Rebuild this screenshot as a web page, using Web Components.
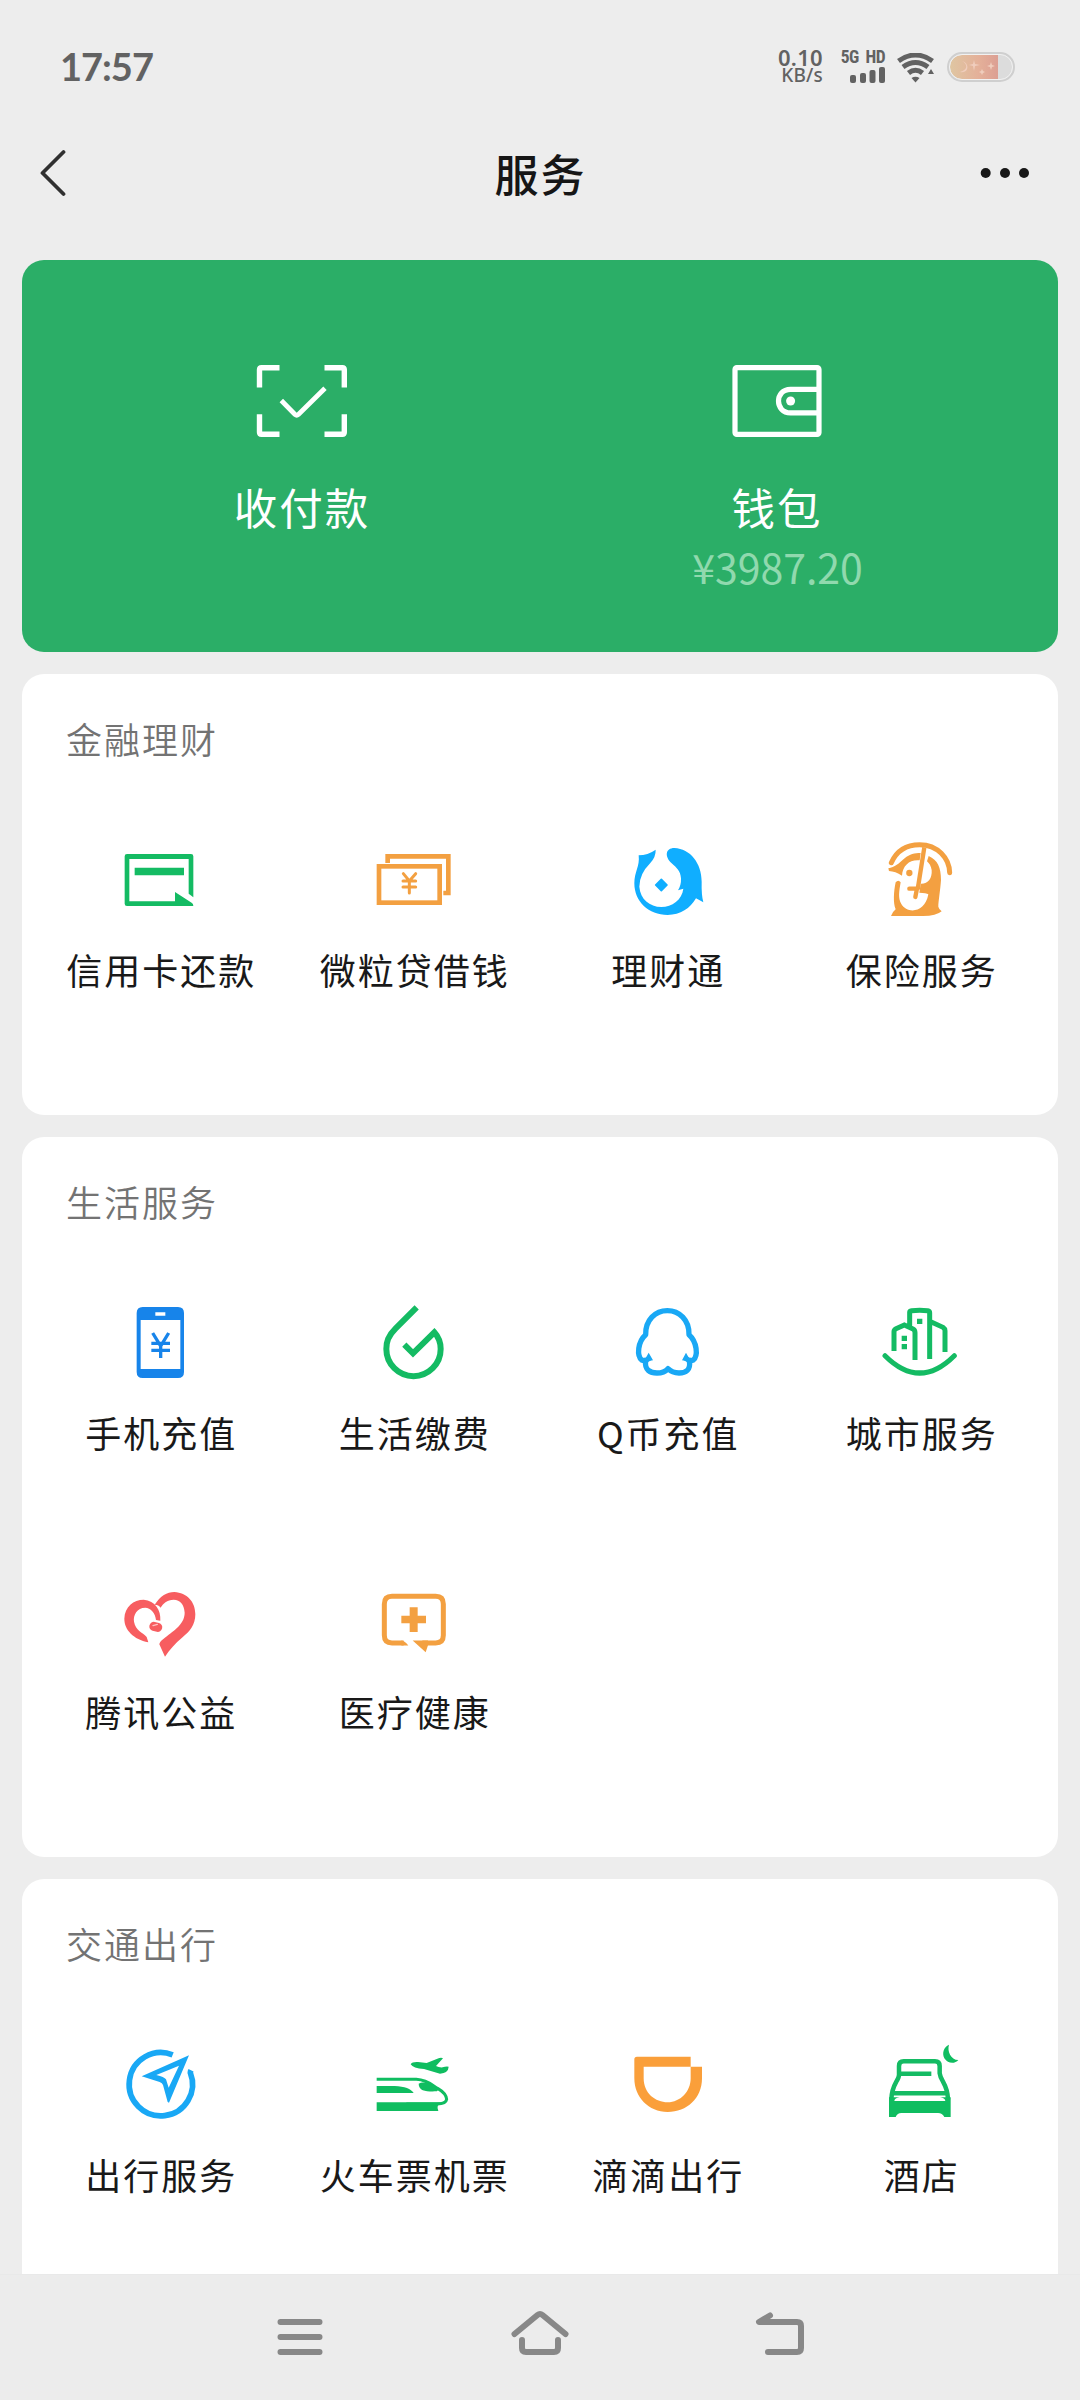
<!DOCTYPE html>
<html lang="zh-CN">
<head>
<meta charset="utf-8">
<title>服务</title>
<style>
html,body{margin:0;padding:0}
body{width:1080px;height:2400px;overflow:hidden;background:#ededed;color:#181818;font-family:"Noto Sans CJK SC",sans-serif}
</style>
</head>
<body>
<app-shell>
  <status-bar slot="top"></status-bar>
  <title-bar slot="top">服务</title-bar>
  <pay-card>
    <pay-item icon="scan">收付款</pay-item>
    <pay-item icon="wallet" amount="¥3987.20">钱包</pay-item>
  </pay-card>
  <service-section heading="金融理财">
    <service-item icon="credit">信用卡还款</service-item>
    <service-item icon="loan">微粒贷借钱</service-item>
    <service-item icon="wealth">理财通</service-item>
    <service-item icon="insurance">保险服务</service-item>
  </service-section>
  <service-section heading="生活服务">
    <service-item icon="phone">手机充值</service-item>
    <service-item icon="bills">生活缴费</service-item>
    <service-item icon="qcoin">Q币充值</service-item>
    <service-item icon="city">城市服务</service-item>
    <service-item icon="charity">腾讯公益</service-item>
    <service-item icon="health">医疗健康</service-item>
  </service-section>
  <service-section heading="交通出行">
    <service-item icon="travel">出行服务</service-item>
    <service-item icon="train">火车票机票</service-item>
    <service-item icon="didi">滴滴出行</service-item>
    <service-item icon="hotel">酒店</service-item>
  </service-section>
  <nav-bar slot="bottom"></nav-bar>
</app-shell>
<script>
const G='#14bb63', O='#f3a041', B='#19a8f5';
const ICONS={
scan:['252 352 100 98',`<g fill="none" stroke="#fff" stroke-width="5.4"><path d="M279.500 367.700H261.500Q259.500 367.700 259.500 369.700V387.500M324.500 367.700H342.300Q344.300 367.700 344.300 369.700V387.500M259.500 414.300V432.300Q259.500 434.300 261.500 434.300H279.500M324.500 434.300H342.300Q344.300 434.300 344.300 432.300V414.300"/><path d="M281.300 400.500L295 414.500Q296.700 416 298.400 414.500L325 388.300" stroke-width="4.800"/></g>`],
wallet:['727 352 100 98',`<g fill="none" stroke="#fff" stroke-width="5.200"><rect x="735" y="367.600" width="84" height="66.800" rx="1.800"/><path d="M819 389.300H790.500C774.500 389.300 774.500 412.800 790.500 412.800H819"/></g><circle cx="790.600" cy="401" r="4.500" fill="#fff"/>`],
credit:['215 396 288 288',`<g fill="${G}"><path fill-rule="evenodd" d="M260 462H452Q459 462 459 469V592L445 581V477H267V604H404V576L455 609Q459 612 459 618H260Q253 618 253 611V469Q253 462 260 462Z"/><path d="M283 503H431V526H283Z"/></g>`],
loan:['976 396 288 288',`<g fill="none" stroke="${O}" stroke-width="14"><rect x="1018" y="499" width="182" height="109"/><path d="M1044 489V469H1226V579H1211"/><path stroke-width="9" stroke-linecap="round" d="M1091 521L1109 543L1128 521M1109 543V579M1090 543H1128M1090 561H1128"/></g>`],
wealth:['236 396 288 288',`<path fill="#10aeff" d="M295 466Q322 466 346 449Q347 470 330 489Q297 522 297 560C300 598 328 620 363 621C395 620 425 600 429 566L413 571Q423 555 422 535C420 512 410 505 394 490C372 470 375 444 402 444C450 446 484 490 484 545Q483 585 489 607L467 595C450 625 420 645 382 645C325 645 282 605 282 550C282 515 299 500 295 466Z"/><path fill="#10aeff" stroke="#10aeff" stroke-width="5" stroke-linejoin="round" d="M363 538L380 555L363 572L346 555Z"/>`],
insurance:['997 396 288 288',`<g fill="${O}"><path d="M1055 488C1073 447 1108 434 1140 434C1194 434 1229 475 1230 518" fill="none" stroke="${O}" stroke-width="15" stroke-linecap="round"/><path d="M1154 442L1134 568" fill="none" stroke="${O}" stroke-width="13"/><path d="M1109 566H1132L1127 591" fill="none" stroke="${O}" stroke-width="13" stroke-linecap="round" stroke-linejoin="round"/><path d="M1046 505C1065 503 1078 490 1095 475C1110 462 1125 459 1143 459L1140 481C1110 478 1089 496 1087 527Q1067 514 1048 513Z"/><path d="M1167 468C1194 480 1204 502 1204 540C1202 570 1196 605 1196 620Q1198 628 1206 634Q1190 648 1150 648H1054Q1058 636 1068 628C1060 610 1062 575 1068 547Q1076 538 1083 547C1078 575 1075 595 1085 612C1102 642 1156 640 1166 583Q1160 579 1139 578L1143 551C1165 552 1178 535 1176 510C1174 498 1169 490 1162 484Z"/><circle cx="1109" cy="519" r="9.500"/></g>`],
phone:['215 375 288 288',`<path fill="#1784ea" fill-rule="evenodd" d="M307 411H413Q431 411 431 429V606Q431 624 413 624H307Q289 624 289 606V429Q289 411 307 411ZM301 450V597H420V450ZM345 427V437H375V427Z"/><path fill="none" stroke="#1784ea" stroke-width="10" d="M337 489L361 528L385 489M361 526V564M333 520H389M333 541H389"/>`],
bills:['976 375 288 288',`<path fill="none" stroke="${G}" stroke-width="18" d="M1131 412L1068 475C1045 498 1040 515 1040 537A81.500 81.500 0 0 0 1203 537Q1203 508 1184 487L1120 550L1094 524"/>`],
qcoin:['236 75 288 288',`<g fill="none" stroke="${B}" stroke-width="16" stroke-linejoin="round"><path d="M329 263Q315 275 304 270C289 258 292 215 316 194C315 150 345 122 381 122C417 122 447 150 446 194C470 215 474 258 459 270Q448 275 434 263"/><path d="M316 273C312 300 330 309 350 309C366 309 376 304 383 296C391 304 401 309 416 309C436 309 452 300 447 273"/></g><path fill="${B}" d="M325 248L338 271L310 275ZM437 248L425 271L452 275Z"/>`],
city:['997 75 288 288',`<g fill="none" stroke="${G}" stroke-width="15"><path stroke-linecap="round" d="M1036 257Q1140 361 1244 257"/><path d="M1063 243V185Q1063 179 1069 176L1094 165L1120 177Q1126 180 1126 188V270M1110 170V127Q1110 123 1116 122Q1140 120 1164 122Q1170 123 1170 128V267M1170 154L1210 172Q1216 176 1216 182V246"/></g><path fill="${G}" d="M1086 197h16v16h-16zM1086 222h16v16h-16zM1132 146h16v16h-16z"/>`],
charity:['215 42 288 288',`<g fill="#f75d60"><path d="M343 134C360 108 380 96 402 96C440 98 465 125 465 163C465 195 448 215 425 233C405 250 388 268 374 290L357 253Q357 246 370 236C395 215 433 195 433 158C431 133 420 120 400 119C380 120 368 130 361 143Q355 134 343 134Z"/><path d="M360 182L347 180C345 158 330 143 315 143C290 143 278 165 281 185C286 212 306 216 319 231L324 247C280 238 252 210 252 176C253 140 280 119 310 119C345 122 362 150 360 182Z"/><rect x="327" y="187" width="39" height="27" rx="13" transform="rotate(14 346 200)"/></g><path fill="none" stroke="#ffc3c3" stroke-width="4" stroke-linecap="round" d="M338 197L351 193"/>`],
health:['976 42 288 288',`<g fill="${O}"><path fill="none" stroke="${O}" stroke-width="15" d="M1092 249H1057Q1034 249 1034 226V132Q1034 109 1057 109H1188Q1211 109 1211 132V226Q1211 249 1188 249H1148"/><path d="M1085 241.500Q1096 243 1106 256.500H1085ZM1119 241.500H1165V256L1158 277ZM1110 142h24v25h25v23h-25v26h-24v-26h-25v-23h25z"/></g>`],
travel:['215 411 288 288',`<path fill="none" stroke="${B}" stroke-width="17" d="M397 464.500A95 95 0 1 0 450 518Q450 515 452 511"/><path fill="${B}" fill-rule="evenodd" d="M304 529L446 466L386 608L382 606L368 555Q366 549 358 546ZM348 525Q372 531 377 538L385 563L416 497Z"/>`],
train:['976 411 288 288',`<g fill="#0fbd60"><path fill="none" stroke="#0fbd60" stroke-width="9" d="M1011 538H1130C1165 540 1178 556 1195 566C1214 577 1220 588 1221 598Q1219 612 1192 612H1100"/><path d="M1011 607H1206Q1188 616 1196 633H1011ZM1011 558H1065C1095 559 1114 567 1122 579H1011ZM1137 551C1150 542 1182 550 1196 569L1192 574C1165 575 1137 575 1137 551ZM1113 493Q1117 485 1135 486L1161 489L1193 476Q1205 471 1210 475L1189 498Q1198 503 1209 502Q1220 498 1227 500Q1226 519 1201 521L1153 507Q1120 505 1113 493Z"/></g>`],
didi:['236 81 288 288',`<path fill="#fa9f3a" d="M282 148Q282 140 290 140H451V170H310V205C310 250 345 277 382 277C420 277 451 245 451 205V170H485V205C485 265 440 306 382 306C325 306 282 262 282 205Z"/>`],
hotel:['997 81 288 288',`<g fill="#0fbd60"><path fill="none" stroke="#14bb63" stroke-width="13.500" d="M1055 268Q1056 240 1070 215Q1078 202 1078 195V168Q1078 154 1092 154H1186Q1200 154 1200 168V190Q1201 200 1210 215Q1224 240 1225 268M1078 191.500H1175M1060 249.500H1221"/><path d="M1048 262H1080Q1065 264 1064 273H1217Q1216 264 1201 262H1233V321H1214Q1208 309 1195 309H1085Q1073 309 1068 321H1048ZM1228 104C1222 122 1233 150 1256 150C1246 162 1225 162 1214 145C1206 128 1213 110 1228 104Z"/></g>`]
};
const svg=(n,w,h)=>`<svg width="${w}" height="${h}" viewBox="${ICONS[n][0]}" aria-hidden="true">${ICONS[n][1]}</svg>`;
const define=(name,render)=>customElements.define(name,class extends HTMLElement{
  connectedCallback(){ if(!this.shadowRoot) this.attachShadow({mode:'open'}).innerHTML=render(this); }
});

define('app-shell',()=>`<style>
:host{display:flex;flex-direction:column;width:1080px;height:2400px;background:#ededed}
main{flex:1;min-height:0;overflow:hidden;display:flex;flex-direction:column;gap:22px;padding:0 22px}
</style><slot name="top"></slot><main><slot></slot></main><slot name="bottom"></slot>`);

define('status-bar',()=>`<style>
:host{display:flex;height:134px;box-sizing:border-box;padding:0 65px 0 60px;justify-content:space-between;color:#626262}
.time{font:700 38px/40px Lato,sans-serif;margin-top:46px;letter-spacing:-1px}
.right{display:flex;align-items:flex-start;padding-top:49px}
.speed{display:flex;flex-direction:column;align-items:flex-end;width:46px;font-family:"Noto Sans",sans-serif}
.speed span{white-space:nowrap}
.n{font-size:22px;line-height:17px;font-weight:600;letter-spacing:.3px}.k{font-size:19px;line-height:18px;font-weight:500;letter-spacing:.2px}
.net{display:flex;flex-direction:column;align-items:flex-end;margin-left:13px;width:49px}
.net span{font:700 17.500px/16px "Roboto Condensed",Roboto,sans-serif;white-space:nowrap;letter-spacing:-.6px}
svg{display:block}
.net svg{margin-top:1px}.wifi{margin:4px 0 0 12px}.bat{margin:3px 0 0 13px}
</style>
<div class="time">17:57</div>
<div class="right">
<div class="speed"><span class="n">0.10</span><span class="k">KB/s</span></div>
<div class="net"><span>5G&nbsp; HD</span><svg width="36" height="17" fill="#626262"><rect x="1" y="9" width="6" height="8" rx="2"/><rect x="11" y="7" width="6" height="10" rx="2"/><rect x="20.500" y="4" width="6" height="13" rx="2"/><rect x="30" y="1" width="6" height="16" rx="2"/></svg></div>
<svg class="wifi" width="37" height="30" viewBox="0 0 37 30" fill="none" stroke="#626262" stroke-width="5"><path d="M1.500 8Q18.500-4 35.500 8M6 14Q18.500 5 31 14M11.500 20Q18.500 14.500 25.500 20"/><path d="M14.500 25Q18.500 22.500 22.500 25L18.500 29.500ZM34 16L37 21H31Z" fill="#626262" stroke="none"/></svg>
<svg class="bat" width="68" height="30" viewBox="0 0 68 30"><defs><linearGradient id="g"><stop stop-color="#dfc6a2"/><stop offset=".6" stop-color="#e4b099"/><stop offset="1" stop-color="#dc9f93"/></linearGradient></defs><rect x="1" y="1" width="66" height="28" rx="14" fill="#dcdcdc" stroke="#cfcfcf" stroke-width="2"/><path d="M15 3H51V27H15A12 12 0 0 1 15 3Z" fill="url(#g)"/><rect x="2.500" y="2.500" width="63" height="25" rx="12.500" fill="none" stroke="#f1f1f1"/><path d="M15 9C21 12 21 18 13 20C22 22 23 11 15 9ZM27 8L28 12L33 13L28 14L27 19L26 14L22 13L26 12ZM44 10L45 13L48 14L45 15L44 18L43 15L40 14L43 13ZM35 17L36 19L38 20L36 21L35 23L34 21L32 20L34 19Z" fill="#f0cdbd"/></svg>
</div>`);

define('title-bar',()=>`<style>
:host{display:flex;height:126px;box-sizing:border-box;padding:0 50px 48px 40px;align-items:center;justify-content:space-between}
h1{margin:0;font-size:44px;line-height:60px;font-weight:500;letter-spacing:2px;color:#161616;padding-left:34px}
svg{display:block}
</style>
<svg width="27" height="48" viewBox="40 149 27 48"><path d="M63.500 152L42.500 173L63.500 194" fill="none" stroke="#303030" stroke-width="3.800" stroke-linecap="round" stroke-linejoin="round"/></svg>
<h1><slot></slot></h1>
<svg width="50" height="12" viewBox="980 167 50 12" fill="#181818"><circle cx="985.700" cy="173" r="5"/><circle cx="1005" cy="173" r="5"/><circle cx="1024" cy="173" r="5"/></svg>`);

define('pay-card',()=>`<style>
:host{display:grid;grid-template-columns:1fr 1fr;flex:none;height:392px;box-sizing:border-box;padding:92px 44px 0 42px;border-radius:22px;background:#2bae67}
</style><slot></slot>`);

define('pay-item',el=>`<style>
:host{display:flex;flex-direction:column;align-items:center;color:#fff}
svg{display:block}
.t{font-size:43.500px;line-height:60px;letter-spacing:2px;margin-top:27px;padding-left:1px}
.a{font-size:41px;line-height:50px;font-weight:400;color:#90d9ae;margin-top:4px;padding-left:2px;white-space:nowrap}
</style>${svg(el.getAttribute('icon'),100,98)}<div class="t"><slot></slot></div>${el.hasAttribute('amount')?`<div class="a">${el.getAttribute('amount')}</div>`:''}`);

define('service-section',el=>`<style>
:host{display:block;flex:none;box-sizing:border-box;padding:0 11px 54px;border-radius:22px;background:#fff}
h2{margin:0;height:108px;box-sizing:border-box;padding:40px 33px 0;font-size:36px;line-height:48px;font-weight:350;letter-spacing:2px;color:#737373}
.grid{display:grid;grid-template-columns:repeat(4,1fr);grid-auto-rows:279px}
</style><h2>${el.getAttribute('heading')}</h2><div class="grid"><slot></slot></div>`);

define('service-item',el=>`<style>
:host{display:flex;flex-direction:column;align-items:center;padding-top:50px;min-width:0}
svg{display:block;flex:none}
.t{font-size:36px;line-height:48px;letter-spacing:2px;padding-left:3px;margin-top:17px;white-space:nowrap;color:#191919}
</style>${svg(el.getAttribute('icon'),96,96)}<div class="t"><slot></slot></div>`);

define('nav-bar',()=>`<style>
:host{display:flex;flex:none;height:126px;box-sizing:border-box;border-top:1px solid #e9e9e9;padding:33px 180px 0;background:#ececec}
div{flex:1;display:flex;justify-content:center}svg{display:block}
</style>
${['M280.500 2322H319.500M280.500 2337H319.500M280.500 2352H319.500','M514.500 2334L537.500 2315Q540 2313 542.500 2315L565.500 2334M522 2340V2348Q522 2352 526 2352H554Q558 2352 558 2348V2340','M770 2315.500L759 2322H797Q801 2322 801 2326V2348Q801 2352 797 2352H768'].map((d,i)=>`<div><svg width="60" height="52" viewBox="${270+240*i} 2308 60 52"><path d="${d}" fill="none" stroke="#888" stroke-width="6" stroke-linecap="round" stroke-linejoin="round"/></svg></div>`).join('')}`);
</script>
</body>
</html>
